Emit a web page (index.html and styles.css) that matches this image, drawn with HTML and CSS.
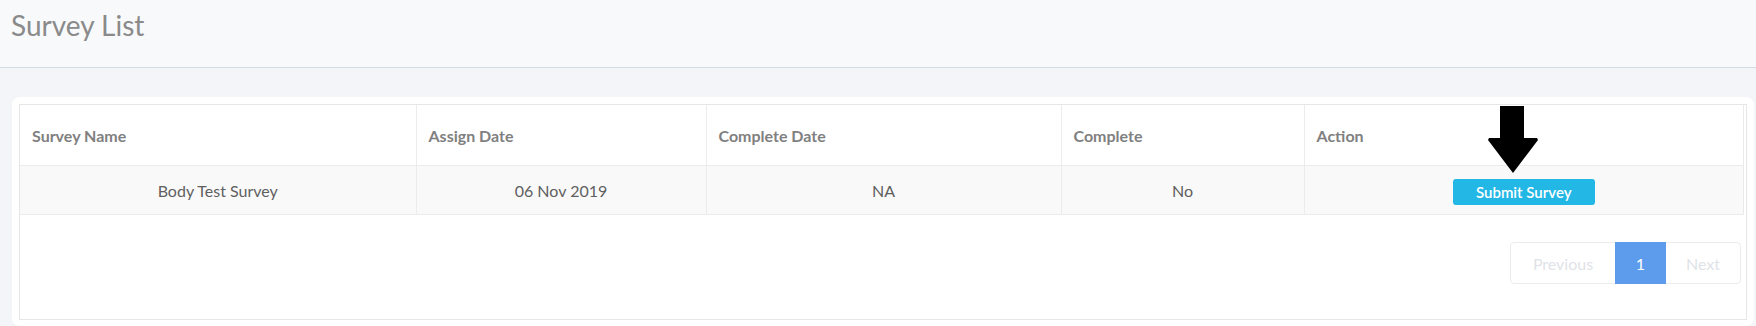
FILE: index.html
```html
<!DOCTYPE html>
<html lang="en">
<head>
<meta charset="utf-8">
<title>Survey List</title>
<link rel="stylesheet" href="styles.css">
</head>
<body>
<header class="page-header">
  <h1 class="page-title">Survey List</h1>
</header>
<main class="content">
  <section class="card">
    <div class="table-wrap">
      <table class="grid">
        <colgroup>
          <col class="col-name">
          <col class="col-assign">
          <col class="col-complete-date">
          <col class="col-complete">
          <col class="col-action">
        </colgroup>
        <thead>
          <tr>
            <th>Survey Name</th>
            <th>Assign Date</th>
            <th>Complete Date</th>
            <th>Complete</th>
            <th class="action-head">Action
              <svg class="arrow" width="50" height="68" viewBox="0 0 50 68" aria-hidden="true">
                <polygon points="12,0 36,0 36,32 49,32 50,34 25,67 0,34 1,32 12,32" fill="#000"/>
              </svg>
            </th>
          </tr>
        </thead>
        <tbody>
          <tr>
            <td>Body Test Survey</td>
            <td>06 Nov 2019</td>
            <td>NA</td>
            <td>No</td>
            <td><button class="btn-submit" type="button">Submit Survey</button></td>
          </tr>
        </tbody>
      </table>
      <div class="pager">
        <ul class="pagination">
          <li class="page-item disabled"><span class="page-link prev">Previous</span></li>
          <li class="page-item active"><span class="page-link num">1</span></li>
          <li class="page-item disabled"><span class="page-link next">Next</span></li>
        </ul>
      </div>
    </div>
  </section>
</main>
</body>
</html>
```

FILE: styles.css
```css
html, body {
  margin: 0;
  padding: 0;
}

body {
  background: #f3f5f8;
  font-family: "Lato", "Noto Sans", sans-serif;
  color: #666;
  width: 1756px;
  height: 326px;
  overflow: hidden;
}

.page-header {
  height: 68px;
  background: #f8f9fb;
  border-bottom: 1px solid #d3dbe3;
  box-sizing: border-box;
  padding: 8px 0 0 11px;
}

.page-title {
  margin: 0;
  font-weight: 400;
  font-size: 28px;
  line-height: 34px;
  color: #8a8a8a;
}

.content {
  padding: 29px 2px 0 12px;
}

.card {
  background: #fff;
  border-radius: 8px;
  padding: 7px 7px 6px 7px;
  height: 229px;
  box-sizing: border-box;
}

.table-wrap {
  border: 1px solid #e6e6e6;
  height: 216px;
  box-sizing: border-box;
}

.grid {
  width: calc(100% - 2px);
  table-layout: fixed;
  border-collapse: collapse;
  border-right: 1px solid #eaeaea;
}

.col-name { width: 396px; }
.col-assign { width: 290px; }
.col-complete-date { width: 355px; }
.col-complete { width: 243px; }

.grid th {
  height: 60px;
  padding: 0 12px;
  text-align: left;
  font-weight: 700;
  font-size: 16px;
  color: #808080;
  border-left: 1px solid #ececec;
  border-bottom: 1px solid #ececec;
  vertical-align: middle;
}

.grid th:first-child,
.grid td:first-child {
  border-left: none;
}

.grid td {
  height: 48px;
  padding: 0 12px;
  text-align: center;
  font-size: 16px;
  color: #5f5f5f;
  background: #f9f9f9;
  border-left: 1px solid #ececec;
  border-bottom: 1px solid #ececec;
  vertical-align: middle;
}

.action-head {
  position: relative;
}

.arrow {
  position: absolute;
  left: 183px;
  top: 1px;
}

.btn-submit {
  font-family: inherit;
  font-size: 15px;
  font-weight: 600;
  color: #fff;
  background: #23b7e5;
  border: none;
  border-radius: 3px;
  width: 142px;
  height: 26px;
  padding: 0;
  margin-top: 3px;
}

.pager {
  display: flex;
  justify-content: flex-end;
  padding: 27px 5px 0 0;
}

.pagination {
  display: flex;
  list-style: none;
  margin: 0;
  padding: 0;
  border: 1px solid #ececec;
  border-radius: 4px;
  height: 42px;
  box-sizing: border-box;
}

.page-link {
  display: flex;
  align-items: center;
  justify-content: center;
  height: 40px;
  font-size: 16px;
  color: #dfe3e8;
}

.prev { width: 104px; }
.num { width: 51px; background: #5d9cec; color: #fff; margin-top: -1px; height: 42px; }
.next { width: 74px; }
```
